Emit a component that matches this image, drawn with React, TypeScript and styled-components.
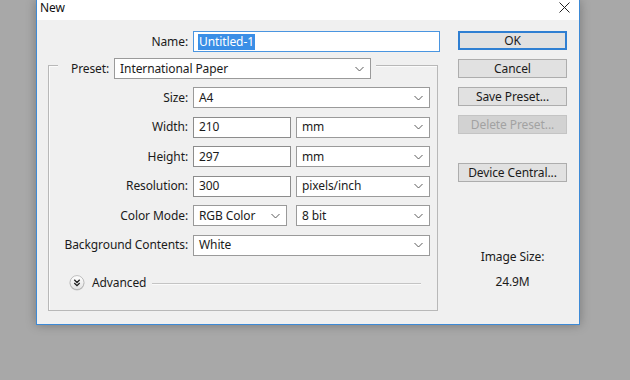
import React from "react";
import styled, { createGlobalStyle, css } from "styled-components";

const Global = createGlobalStyle`
  html, body { margin: 0; padding: 0; }
  body {
    width: 630px;
    height: 380px;
    overflow: hidden;
    background: #a8a8a8;
    font-family: "Noto Sans", "Open Sans", sans-serif;
    font-size: 12px;
    letter-spacing: -0.1px;
    color: #1b1b1b;
  }
`;

const Desktop = styled.div`
  width: 630px;
  height: 380px;
  padding-left: 36px;
  box-sizing: border-box;
`;

const Window = styled.div`
  width: 544px;
  box-sizing: border-box;
  border: 1px solid #3d8ad6;
  border-top: none;
  background: #f0f0f0;
  box-shadow: 0 0 10px rgba(0, 0, 0, 0.28);
`;

const TitleBar = styled.div`
  height: 20px;
  box-sizing: border-box;
  background: #ffffff;
  display: flex;
  align-items: flex-start;
  justify-content: space-between;
  padding: 1px 9px 0 3px;
`;

const Title = styled.span`
  font-size: 12px;
  line-height: 13px;
  color: #111;
`;

const CloseIcon = styled.svg`
  margin-top: 1px;
`;

const Body = styled.div`
  display: flex;
  padding: 11px 12px 13px 11px;
  gap: 18px;
`;

const LeftCol = styled.div`
  width: 392px;
  display: flex;
  flex-direction: column;
`;

const NameRow = styled.div`
  display: flex;
  align-items: center;
  gap: 5px;
  height: 21px;
`;

const Label = styled.span<{ $w?: number }>`
  ${(p) =>
    p.$w !== undefined &&
    css`
      width: ${p.$w}px;
    `}
  text-align: right;
  white-space: nowrap;
  line-height: 16px;
`;

const fieldBase = css`
  height: 21px;
  box-sizing: border-box;
  background: #ffffff;
  border: 1px solid #8c8c8c;
  display: flex;
  align-items: center;
  padding: 0 6px 0 5px;
  white-space: nowrap;
  line-height: 16px;
`;

const TextBox = styled.div<{ $w: number; $focus?: boolean }>`
  ${fieldBase}
  width: ${(p) => p.$w}px;
  ${(p) =>
    p.$focus &&
    css`
      border-color: #4a95e0;
      padding-left: 4px;
    `}
`;

const Selected = styled.span`
  background: #3a8ee6;
  color: #ffffff;
  padding: 0 1px;
`;

const Select = styled.div<{ $w: number }>`
  ${fieldBase}
  width: ${(p) => p.$w}px;
  justify-content: space-between;
  border-color: #9a9a9a;
`;

const Group = styled.div`
  width: 390px;
  box-sizing: border-box;
  margin-top: 13px;
  border: 1px solid #b8b8b8;
  box-shadow: inset 1px 1px 0 #fbfbfb;
  padding: 0 7px 18px 0;
  display: flex;
  flex-direction: column;
`;

const GroupHeader = styled.div`
  align-self: flex-start;
  margin: -8px 0 0 9px;
  padding: 0 5px 0 13px;
  background: #f0f0f0;
  display: flex;
  align-items: center;
  gap: 5px;
`;

const Rows = styled.div`
  margin-top: 8px;
  display: grid;
  grid-template-columns: 139px auto;
  column-gap: 5px;
  row-gap: 8.6px;
  align-items: center;
`;

const Controls = styled.div`
  display: flex;
  align-items: center;
  gap: 5px;
`;

const ControlsWide = styled(Controls)`
  gap: 9px;
`;

const AdvancedRow = styled.div`
  margin-top: 19px;
  padding-left: 20px;
  padding-right: 9px;
  display: flex;
  align-items: center;
  height: 17px;
`;

const AdvIcon = styled.svg`
  margin-right: 7px;
  flex: none;
`;

const AdvText = styled.span`
  line-height: 16px;
  margin-right: 6px;
`;

const Rule = styled.div`
  flex: 1;
  height: 1px;
  background: #c4c4c4;
  box-shadow: 0 1px 0 #fafafa;
`;

const RightCol = styled.div`
  width: 109px;
  display: flex;
  flex-direction: column;
`;

const Button = styled.div<{ $default?: boolean; $disabled?: boolean; $gap?: number }>`
  height: 19px;
  box-sizing: border-box;
  margin-top: ${(p) => p.$gap ?? 0}px;
  background: #e1e1e1;
  border: 1px solid #adadad;
  display: flex;
  align-items: center;
  justify-content: center;
  line-height: 16px;
  ${(p) =>
    p.$default &&
    css`
      border-color: #2f7fd2;
      box-shadow: inset 0 0 0 1px #2f7fd2;
    `}
  ${(p) =>
    p.$disabled &&
    css`
      background: #d2d2d2;
      border-color: #c4c4c4;
      color: #a2a2a2;
    `}
`;

const Info = styled.div<{ $gap: number }>`
  margin-top: ${(p) => p.$gap}px;
  text-align: center;
  line-height: 16px;
`;

const Chevron = () => (
  <svg width="9" height="6" viewBox="0 0 9 6">
    <path d="M0.5 1 L4.5 5 L8.5 1" fill="none" stroke="#5a5a5a" strokeWidth="1" />
  </svg>
);

const Dropdown = ({ w, value }: { w: number; value: string }) => (
  <Select $w={w}>
    <span>{value}</span>
    <Chevron />
  </Select>
);

export default function App() {
  return (
    <>
      <Global />
      <Desktop>
        <Window>
          <TitleBar>
            <Title>New</Title>
            <CloseIcon width="11" height="11" viewBox="0 0 11 11">
              <path d="M0.5 0.5 L10.5 10.5 M10.5 0.5 L0.5 10.5" stroke="#222" strokeWidth="1" />
            </CloseIcon>
          </TitleBar>
          <Body>
            <LeftCol>
              <NameRow>
                <Label $w={140}>Name:</Label>
                <TextBox $w={247} $focus>
                  <Selected>Untitled-1</Selected>
                </TextBox>
              </NameRow>
              <Group>
                <GroupHeader>
                  <Label>Preset:</Label>
                  <Dropdown w={257} value="International Paper" />
                </GroupHeader>
                <Rows>
                  <Label>Size:</Label>
                  <Dropdown w={237} value="A4" />

                  <Label>Width:</Label>
                  <Controls>
                    <TextBox $w={98}>210</TextBox>
                    <Dropdown w={134} value="mm" />
                  </Controls>

                  <Label>Height:</Label>
                  <Controls>
                    <TextBox $w={98}>297</TextBox>
                    <Dropdown w={134} value="mm" />
                  </Controls>

                  <Label>Resolution:</Label>
                  <Controls>
                    <TextBox $w={98}>300</TextBox>
                    <Dropdown w={134} value="pixels/inch" />
                  </Controls>

                  <Label>Color Mode:</Label>
                  <ControlsWide>
                    <Dropdown w={94} value="RGB Color" />
                    <Dropdown w={134} value="8 bit" />
                  </ControlsWide>

                  <Label>Background Contents:</Label>
                  <Dropdown w={237} value="White" />
                </Rows>
                <AdvancedRow>
                  <AdvIcon width="16" height="18" viewBox="0 0 16 18">
                    <defs>
                      <linearGradient id="advg" x1="0" y1="0" x2="0" y2="1">
                        <stop offset="0" stopColor="#ffffff" />
                        <stop offset="1" stopColor="#e2e2e2" />
                      </linearGradient>
                    </defs>
                    <circle cx="8" cy="9.3" r="7.3" fill="#c8c8c8" />
                    <circle cx="8" cy="8.6" r="7" fill="url(#advg)" stroke="#b0b0b0" strokeWidth="0.8" />
                    <path d="M5.3 5.8 L8 8.5 L10.7 5.8 M5.3 9 L8 11.7 L10.7 9" fill="none" stroke="#1e1e1e" strokeWidth="1.3" />
                  </AdvIcon>
                  <AdvText>Advanced</AdvText>
                  <Rule />
                </AdvancedRow>
              </Group>
            </LeftCol>
            <RightCol>
              <Button $default>OK</Button>
              <Button $gap={9}>Cancel</Button>
              <Button $gap={9}>Save Preset...</Button>
              <Button $gap={9} $disabled>
                Delete Preset...
              </Button>
              <Button $gap={29}>Device Central...</Button>
              <Info $gap={67}>Image Size:</Info>
              <Info $gap={9}>24.9M</Info>
            </RightCol>
          </Body>
        </Window>
      </Desktop>
    </>
  );
}
